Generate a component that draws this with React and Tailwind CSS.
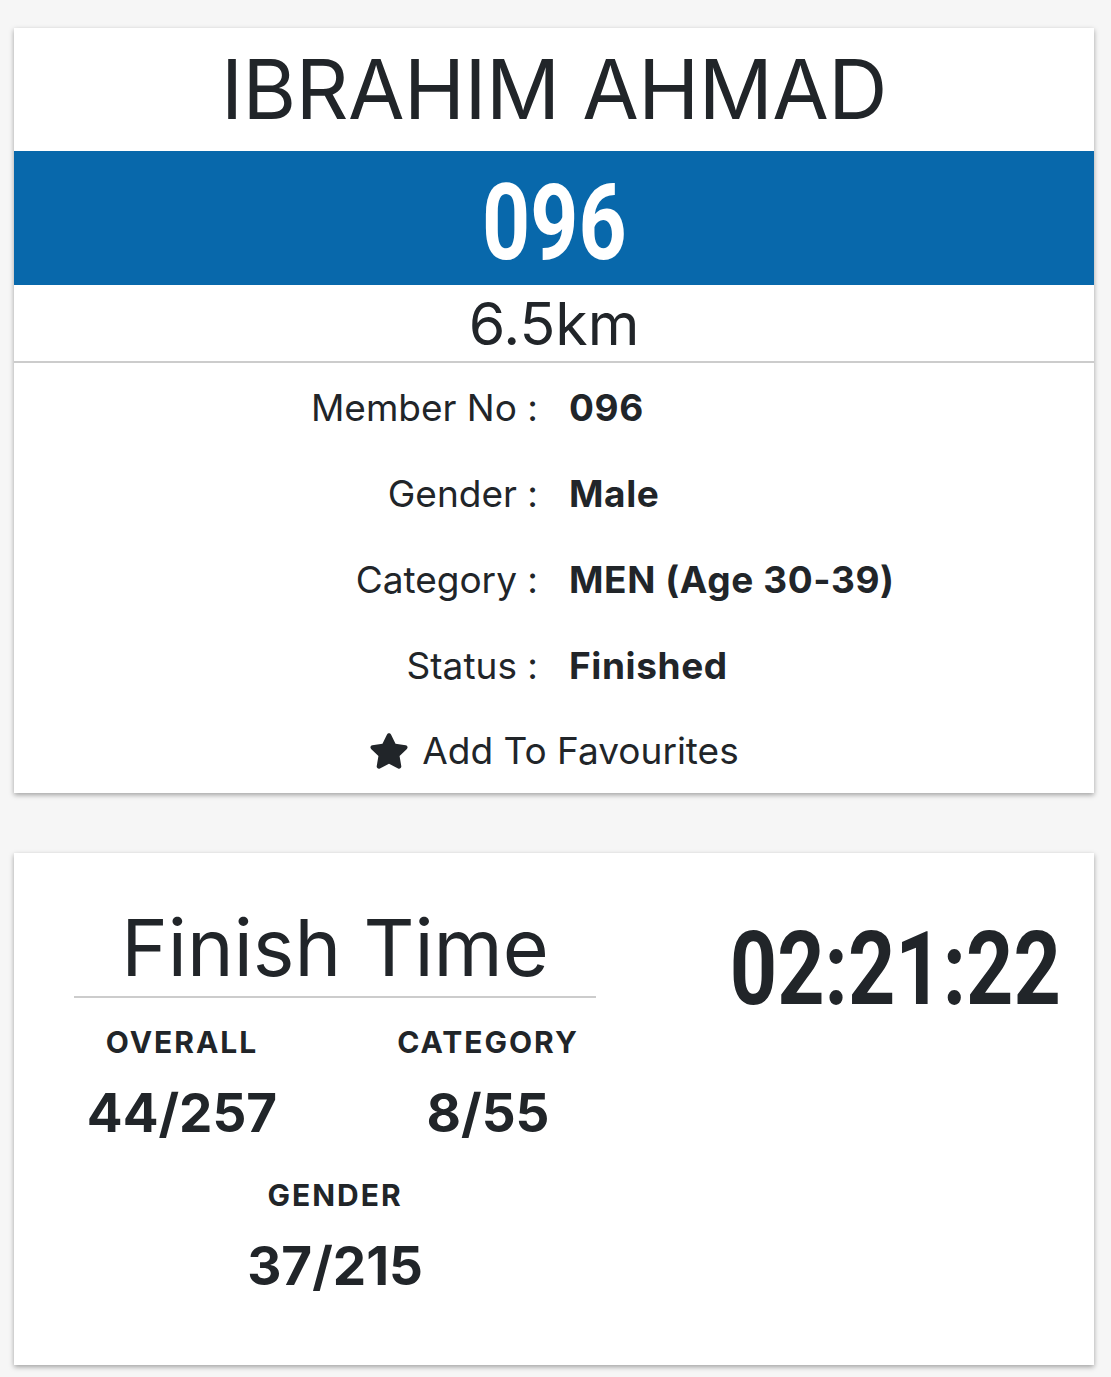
import { FaStar } from "react-icons/fa";

const sans = "font-['Inter','Noto_Sans',sans-serif]";
const narrow = "font-['Roboto','Liberation_Sans',sans-serif]";

const details = [
  { label: "Member No", value: "096" },
  { label: "Gender", value: "Male" },
  { label: "Category", value: "MEN (Age 30-39)" },
  { label: "Status", value: "Finished" },
];

function Stat({ label, value }) {
  return (
    <div className="flex flex-col items-center">
      <div className="text-[30px] leading-[36px] font-bold tracking-[2px]">{label}</div>
      <div className="mt-[20px] text-[53px] leading-[66px] font-bold">{value}</div>
    </div>
  );
}

export default function App() {
  return (
    <div className={`min-h-[1377px] bg-[#f6f6f6] pt-[28px] pl-[14px] pr-[17px] text-[#212529] ${sans}`}>
      <div className="bg-white shadow-[0_2px_5px_rgba(0,0,0,0.35)]">
        <div className="h-[123px] flex items-center justify-center text-[82px] leading-none tracking-[-0.5px]">
          IBRAHIM AHMAD
        </div>
        <div className="h-[134px] bg-[#0868ab] flex items-center justify-center">
          <span className={`inline-block scale-x-[0.8] text-white font-bold text-[105px] leading-none mt-[10px] ${narrow}`}>
            096
          </span>
        </div>
        <div className="h-[76px] flex items-center justify-center text-[59px] leading-none">6.5km</div>
        <div className="h-[2px] bg-[#cccccc]" />
        <div className="pt-[2px]">
          {details.map((d) => (
            <div key={d.label} className="h-[86px] grid grid-cols-[524px_1fr] items-center text-[37px]">
              <div className="text-right">{d.label} :</div>
              <div className="pl-[31px] font-bold tracking-[0.6px]">{d.value}</div>
            </div>
          ))}
          <div className="h-[84px] flex items-center justify-center gap-[13px] text-[37px]">
            <FaStar className="w-[40px] h-[40px]" />
            <span>Add To Favourites</span>
          </div>
        </div>
      </div>

      <div className="mt-[60px] bg-white shadow-[0_2px_5px_rgba(0,0,0,0.35)] flex pb-[66px]">
        <div className="w-[612px] shrink-0 ml-[15px] pt-[46px]">
          <div className="mx-[45px]">
            <div className="text-center text-[79px] leading-[97px]">Finish Time</div>
            <div className="h-[2px] bg-[#cccccc]" />
          </div>
          <div className="mt-[26px] grid grid-cols-2">
            <Stat label="OVERALL" value="44/257" />
            <Stat label="CATEGORY" value="8/55" />
          </div>
          <div className="mt-[31px]">
            <Stat label="GENDER" value="37/215" />
          </div>
        </div>
        <div className="flex-1 pl-[50px] pt-[66px] flex justify-center">
          <span className={`inline-block scale-x-[0.81] font-bold text-[102px] leading-[100px] ${narrow}`}>02:21:22</span>
        </div>
      </div>
    </div>
  );
}
